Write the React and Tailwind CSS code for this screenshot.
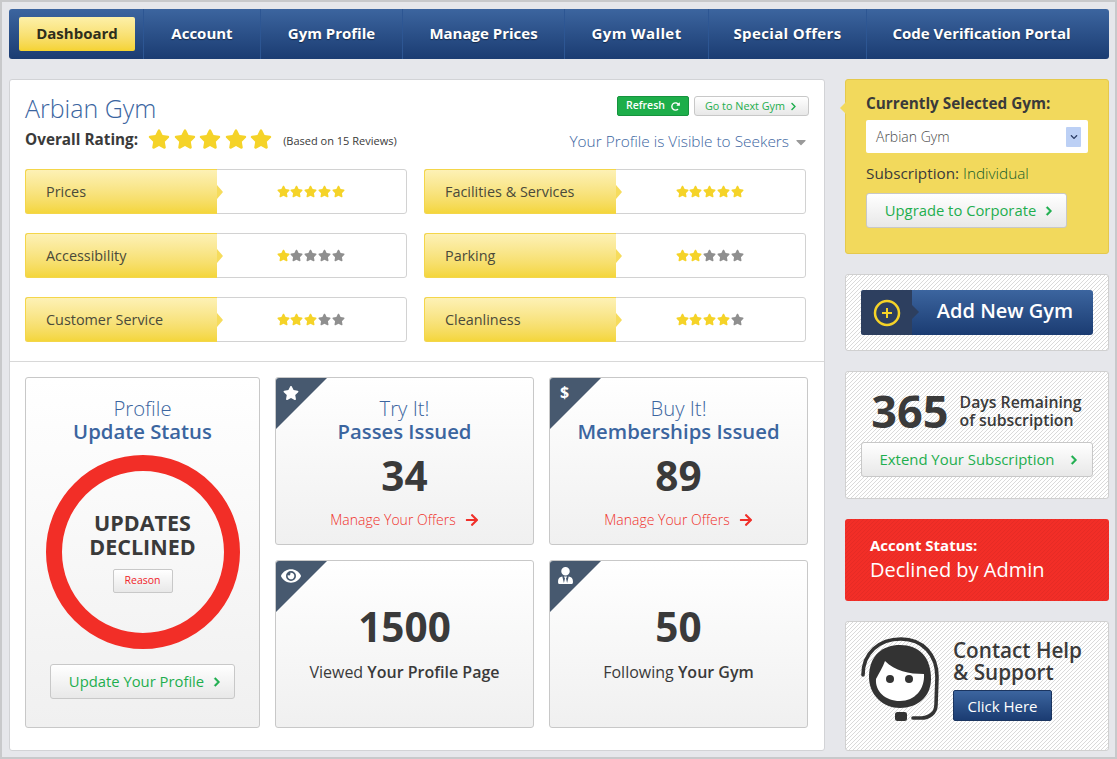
import React from "react";
import { FaStar, FaChevronRight, FaRedoAlt, FaArrowRight, FaEye, FaUserTie, FaCaretDown, FaChevronDown } from "react-icons/fa";

const navItems = [
  ["Account", "w-[117px]"],
  ["Gym Profile", "w-[142px]"],
  ["Manage Prices", "w-[162px]"],
  ["Gym Wallet", "w-[144px] tracking-[0.4px]"],
  ["Special Offers", "w-[158px] tracking-[0.35px]"],
  ["Code Verification Portal", "flex-1 pr-[13px]"],
];

const hatch =
  "bg-[repeating-linear-gradient(135deg,#ffffff_0,#ffffff_1.9px,#dadada_1.9px,#dadada_2.8284px)] border border-[#d0d0d0] rounded-[3px]";

function Stars({ n = 5, big = false }) {
  return (
    <div className={big ? "flex gap-[3.5px]" : "flex gap-[0.75px]"}>
      {[0, 1, 2, 3, 4].map((i) => (
        <FaStar
          key={i}
          className={(big ? "text-[22px] " : "text-[13px] ") + (i < n ? "text-[#f5d328]" : "text-[#8f8f8f]")}
        />
      ))}
    </div>
  );
}

function RatingRow({ label, n }) {
  return (
    <div className="flex h-[45px] w-[382px] rounded-[3px] border border-[#d2d2d2] bg-white">
      <div className="relative -my-px -ml-px flex w-[192px] items-center rounded-l-[3px] border-y border-l border-[#f4d64a] bg-gradient-to-b from-[#fdf1b5] to-[#f4d63a] pl-[20px] text-[14.4px] text-[#4a4a3a]">
        {label}
        <span className="absolute left-full top-[15px] h-0 w-0 border-y-[7px] border-l-[6px] border-y-transparent border-l-[#f6dc5c]" />
      </div>
      <div className="flex flex-1 items-center justify-center pr-[2px]">
        <Stars n={n} />
      </div>
    </div>
  );
}

function GreyBtn({ children, className = "" }) {
  return (
    <div
      className={
        "flex items-center justify-center rounded-[3px] border border-[#c8c8c8] bg-gradient-to-b from-white to-[#e8e8e8] text-[#1eae4e] " +
        className
      }
    >
      {children}
    </div>
  );
}

function Corner({ children }) {
  return (
    <div className="absolute left-0 top-0 h-[51px] w-[51px] rounded-tl-[3px] bg-[#47596f] [clip-path:polygon(0_0,100%_0,0_100%)]">
      {children}
    </div>
  );
}

function Card({ children, icon }) {
  return (
    <div className="relative flex h-[168px] flex-col items-center rounded-[3px] border border-[#c8c8c8] bg-gradient-to-b from-white to-[#f0f0f0]">
      <Corner>{icon}</Corner>
      {children}
    </div>
  );
}

function IssuedCard({ icon, top, title, value }) {
  return (
    <Card icon={icon}>
      <div className="mt-[19px] text-[20.3px] font-light leading-[23px] text-[#3b659f]">{top}</div>
      <div className="text-[20.3px] font-semibold leading-[23px] text-[#3b659f]">{title}</div>
      <div className="mt-[8px] text-[40.5px] font-bold leading-[50px] text-[#3a3a3a]">{value}</div>
      <div className="mt-[9px] flex items-center gap-[9px] text-[14px] font-light leading-[20px] text-[#f0302a]">
        Manage Your Offers <FaArrowRight className="text-[14px]" />
      </div>
    </Card>
  );
}

function StatCard({ icon, value, light, bold }) {
  return (
    <Card icon={icon}>
      <div className="mt-[41px] text-[40.5px] font-bold leading-[50px] text-[#3a3a3a]">{value}</div>
      <div className="mt-[8px] text-[16px] leading-[24px] text-[#3a3a3a]">
        {light} <span className="font-semibold">{bold}</span>
      </div>
    </Card>
  );
}

function Agent() {
  return (
    <svg viewBox="0 0 78 86" className="h-[86px] w-[78px] shrink-0">
      <path d="M2 38 C2 16 18 2 40 2 C62 2 76 18 76 40 L75 68 C75 76 68 81 60 81 L52 81" fill="none" stroke="#333" strokeWidth="3.6" strokeLinecap="round" />
      <path d="M8 40 C8 18 22 8 39 8 C58 8 70 20 70 42 C70 60 56 71 39 71 C22 71 8 58 8 40Z" fill="#333" />
      <path d="M15 42 C18 36 22 30 24 24 C34 34 48 37 63 37 C64 52 54 64 39 64 C24 64 14 54 15 42Z" fill="#fff" />
      <circle cx="29" cy="42" r="4" fill="#333" />
      <circle cx="48" cy="42" r="4" fill="#333" />
      <rect x="34" y="75" width="12" height="9" rx="2.5" fill="#333" />
    </svg>
  );
}

const chev = "text-[10px] stroke-[30]";

export default function App() {
  return (
    <div className="box-border h-[759px] w-[1117px] overflow-hidden border-2 border-[#c8c9cb] bg-[#e6e7eb] pl-[7px] pr-[6px] pt-[7px] font-['Open_Sans',sans-serif] text-[#3a3a3a]">
      {/* Navigation */}
      <nav className="flex h-[50px] items-center rounded-[3px] bg-gradient-to-b from-[#3c659f] to-[#1b3c72] text-[15px] font-bold text-white [text-shadow:0_1px_1px_rgba(0,0,0,0.45)]">
        <div className="flex h-full w-[135px] items-center border-r border-[#2d5693] pl-[10px]">
          <div className="flex h-[34px] w-[116px] items-center justify-center rounded-[2px] bg-gradient-to-b from-[#fdf0a8] to-[#f5d32f] pb-[2px] text-[#2e2e1c] [text-shadow:none]">
            Dashboard
          </div>
        </div>
        {navItems.map(([label, w], i) => (
          <div
            key={label}
            className={
              "flex h-full items-center justify-center pb-[2px] " +
              w +
              (i < navItems.length - 1 ? " border-r border-[#2d5693]" : "")
            }
          >
            {label}
          </div>
        ))}
      </nav>

      <div className="mt-[20px] flex gap-[20px]">
        {/* Main panel */}
        <main className="box-border h-[672px] w-[816px] rounded-[3px] border border-[#d2d3d6] bg-white">
          <div className="flex justify-between pl-[15px] pr-[15px] pt-[11px]">
            <div>
              <h1 className="text-[25px] font-light leading-[34px] text-[#3b659f]">Arbian Gym</h1>
              <div className="mt-[2px] flex h-[24px] items-center">
                <span className="text-[15.3px] font-bold">Overall Rating:</span>
                <span className="ml-[10px]">
                  <Stars big />
                </span>
                <span className="ml-[11px] pt-[4px] text-[11px]">(Based on 15 Reviews)</span>
              </div>
            </div>
            <div className="flex flex-col items-end">
              <div className="mt-[5px] flex gap-[5px]">
                <div className="flex h-[20px] w-[72px] items-center justify-center gap-[6px] rounded-[2px] border border-[#16933e] bg-[#1dae4a] text-[10.5px] font-semibold text-white">
                  Refresh <FaRedoAlt className="text-[9px]" />
                </div>
                <GreyBtn className="h-[20px] w-[115px] gap-[4px] pt-[1px] text-[10.8px]">
                  Go to Next Gym <FaChevronRight className="text-[9px]" />
                </GreyBtn>
              </div>
              <div className="mt-[14px] flex h-[24px] items-center gap-[4px] text-[15.4px] font-light text-[#3b659f]">
                Your Profile is Visible to Seekers
                <FaCaretDown className="text-[16px] text-[#9a9a9a]" />
              </div>
            </div>
          </div>

          <div className="ml-[15px] mt-[15px] grid w-[781px] grid-cols-[382px_382px] gap-x-[17px] gap-y-[19px]">
            <RatingRow label="Prices" n={5} />
            <RatingRow label="Facilities & Services" n={5} />
            <RatingRow label="Accessibility" n={1} />
            <RatingRow label="Parking" n={2} />
            <RatingRow label="Customer Service" n={3} />
            <RatingRow label="Cleanliness" n={4} />
          </div>

          <div className="mt-[19px] flex gap-[15px] border-t border-[#d8d8d8] pl-[15px] pt-[15px]">
            <div className="flex h-[351px] w-[235px] flex-col items-center rounded-[3px] border border-[#c8c8c8] bg-gradient-to-b from-white to-[#f0f0f0]">
              <div className="mt-[19px] text-[20.3px] font-light leading-[23px] text-[#3b659f]">Profile</div>
              <div className="text-[20.3px] font-semibold leading-[23px] text-[#3b659f]">Update Status</div>
              <div className="mt-[12px] flex h-[194px] w-[194px] flex-col items-center justify-center rounded-full border-[16px] border-[#f22e27]">
                <div className="-mt-[1px] text-center text-[21.5px] font-bold leading-[24px] text-[#3a3a3a]">
                  UPDATES
                  <br />
                  DECLINED
                </div>
                <div className="mt-[10px] flex h-[24px] w-[60px] items-center justify-center rounded-[2px] border border-[#c8c8c8] bg-gradient-to-b from-white to-[#e8e8e8] text-[10.5px] text-[#f0242a]">
                  Reason
                </div>
              </div>
              <GreyBtn className="mt-[15px] h-[35px] w-[185px] gap-[8px] pl-[6px] text-[14.8px]">
                Update Your Profile <FaChevronRight className={chev} />
              </GreyBtn>
            </div>

            <div className="grid grid-cols-[259px_259px] gap-[15px]">
              <IssuedCard
                icon={<FaStar className="ml-[7px] mt-[7px] text-[16px] text-white" />}
                top="Try It!"
                title="Passes Issued"
                value="34"
              />
              <IssuedCard
                icon={<div className="ml-[10px] mt-[2px] text-[16px] font-bold text-white">$</div>}
                top="Buy It!"
                title="Memberships Issued"
                value="89"
              />
              <StatCard
                icon={<FaEye className="ml-[5px] mt-[5px] text-[20px] text-white" />}
                value="1500"
                light="Viewed"
                bold="Your Profile Page"
              />
              <StatCard
                icon={<FaUserTie className="ml-[7px] mt-[6px] text-[17px] text-white" />}
                value="50"
                light="Following"
                bold="Your Gym"
              />
            </div>
          </div>
        </main>

        {/* Sidebar */}
        <aside className="flex w-[264px] flex-col gap-[20px]">
          <section className="relative box-border h-[175px] rounded-[3px] border border-[#e5c94c] bg-[#f2d95c] pl-[20px] pt-[11px]">
            <span className="absolute right-full top-[22px] h-0 w-0 border-y-[6px] border-r-[6px] border-y-transparent border-r-[#f2d95c]" />
            <div className="text-[15.3px] font-bold leading-[24px]">Currently Selected Gym:</div>
            <div className="mt-[5px] flex h-[33px] w-[222px] items-center justify-between rounded-[2px] bg-white pl-[10px] pr-[7px] text-[14px] font-light text-[#4a4a4a]">
              Arbian Gym
              <span className="flex h-[20px] w-[15px] items-center justify-center rounded-[1px] bg-[#bcd0f5]">
                <FaChevronDown className="text-[8px] text-[#2c3e66]" />
              </span>
            </div>
            <div className="mt-[8px] text-[15.3px] leading-[24px]">
              Subscription: <span className="font-light text-[#14602a]">Individual</span>
            </div>
            <GreyBtn className="mt-[8px] h-[35px] w-[201px] gap-[8px] pl-[6px] text-[14.8px]">
              Upgrade to Corporate <FaChevronRight className={chev} />
            </GreyBtn>
          </section>

          <section className={"box-border flex h-[77px] items-center justify-center " + hatch}>
            <div className="flex h-[45px] w-[232px] overflow-hidden rounded-[3px] bg-gradient-to-b from-[#3c659f] to-[#1b3c72]">
              <div className="relative flex w-[51px] items-center justify-center bg-[#2d3f5f]">
                <svg viewBox="0 0 28 28" className="h-[28px] w-[28px]">
                  <circle cx="14" cy="14" r="12" fill="none" stroke="#f5d328" strokeWidth="2.5" />
                  <path d="M14 9v10M9 14h10" stroke="#f5d328" strokeWidth="2" />
                </svg>
                <span className="absolute left-full top-[15px] h-0 w-0 border-y-[7px] border-l-[7px] border-y-transparent border-l-[#2d3f5f]" />
              </div>
              <div className="flex flex-1 items-center justify-center pb-[3px] pl-[5px] text-[20px] font-semibold text-white">
                Add New Gym
              </div>
            </div>
          </section>

          <section className={"box-border flex h-[128px] flex-col items-center pt-[12px] " + hatch}>
            <div className="flex h-[54px] items-center gap-[11px] pr-[1px]">
              <div className="text-[45px] font-bold leading-[54px]">365</div>
              <div className="text-[15.8px] font-semibold leading-[18px]">
                Days Remaining
                <br />
                of subscription
              </div>
            </div>
            <GreyBtn className="mt-[4px] h-[35px] w-[232px] gap-[15px] pl-[5px] text-[14.9px]">
              Extend Your Subscription <FaChevronRight className={chev} />
            </GreyBtn>
          </section>

          <section className="box-border h-[82px] rounded-[3px] bg-[repeating-linear-gradient(135deg,#f22e27_0,#f22e27_1.9px,#e62b25_1.9px,#e62b25_2.8284px)] pl-[25px] pt-[15px] text-white">
            <div className="text-[15px] font-bold leading-[22px]">Accont Status:</div>
            <div className="text-[20px] leading-[28px]">Declined by Admin</div>
          </section>

          <section className={"box-border flex h-[130px] gap-[14px] pl-[15px] pt-[15px] " + hatch}>
            <Agent />
            <div className="pt-[2px]">
              <div className="text-[20.7px] font-semibold leading-[22px]">
                Contact Help
                <br />
                &amp; Support
              </div>
              <div className="mt-[7px] flex h-[31px] w-[99px] items-center justify-center rounded-[2px] border border-[#1b3560] bg-gradient-to-b from-[#3c659f] to-[#1b3c72] pt-[1px] text-[15px] font-normal text-white">
                Click Here
              </div>
            </div>
          </section>
        </aside>
      </div>
    </div>
  );
}
